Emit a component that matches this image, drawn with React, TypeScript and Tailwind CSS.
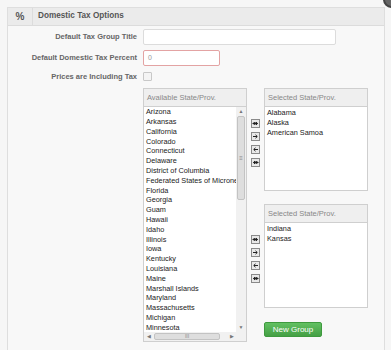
import React from "react";

const available = [
  "Arizona",
  "Arkansas",
  "California",
  "Colorado",
  "Connecticut",
  "Delaware",
  "District of Columbia",
  "Federated States of Micronesia",
  "Florida",
  "Georgia",
  "Guam",
  "Hawaii",
  "Idaho",
  "Illinois",
  "Iowa",
  "Kentucky",
  "Louisiana",
  "Maine",
  "Marshall Islands",
  "Maryland",
  "Massachusetts",
  "Michigan",
  "Minnesota",
];

const MoveIcon = ({ kind }: { kind: "allRight" | "right" | "left" | "allLeft" }) => (
  <svg width="9" height="9" viewBox="0 0 9 9" className="block">
    <rect x="0.5" y="0.5" width="8" height="8" fill="#e9e9e9" stroke="#8a8a8a" />
    {kind === "right" && (
      <path d="M2 4.5h4M4.5 2.8l1.8 1.7-1.8 1.7" stroke="#222" strokeWidth="1" fill="none" />
    )}
    {kind === "left" && (
      <path d="M7 4.5H3M4.5 2.8L2.7 4.5l1.8 1.7" stroke="#222" strokeWidth="1" fill="none" />
    )}
    {kind === "allRight" && (
      <>
        <circle cx="3.6" cy="4.5" r="1.4" fill="#333" />
        <path d="M1.5 4.5h5M5 3l1.6 1.5L5 6" stroke="#222" strokeWidth="1" fill="none" />
      </>
    )}
    {kind === "allLeft" && (
      <>
        <circle cx="5.4" cy="4.5" r="1.4" fill="#333" />
        <path d="M7.5 4.5h-5M4 3L2.4 4.5 4 6" stroke="#222" strokeWidth="1" fill="none" />
      </>
    )}
  </svg>
);

const MoveButtons = () => (
  <div className="flex w-[17px] flex-col items-center gap-[4px] pt-[31px]">
    <MoveIcon kind="allRight" />
    <MoveIcon kind="right" />
    <MoveIcon kind="left" />
    <MoveIcon kind="allLeft" />
  </div>
);

const ListHeader = ({ title }: { title: string }) => (
  <div className="flex h-[18px] items-center border-b border-[#cfcfcf] bg-[#efefef] pl-[3px] text-[7.5px] text-[#888]">
    {title}
  </div>
);

const SelectedBox = ({ items, height }: { items: string[]; height: string }) => (
  <div className={`flex w-[104px] flex-col border border-[#cfcfcf] bg-white ${height}`}>
    <ListHeader title="Selected State/Prov." />
    <ul className="pl-[2px] pt-[1px] text-[7.3px] leading-[9.9px] text-[#222]">
      {items.map((s) => (
        <li key={s}>{s}</li>
      ))}
    </ul>
  </div>
);

export default function App() {
  return (
    <div
      className="relative h-[350px] w-[391px] overflow-hidden bg-[#f6f6f6] pl-[7px] pr-[6px] pt-[7px]"
      style={{ fontFamily: '"Liberation Sans", Arial, sans-serif' }}
    >
      <div className="h-[400px] border border-[#dedede] bg-[#f8f8f8]">
        {/* header */}
        <div className="flex h-[18px] items-stretch border-b border-[#dcdcdc] bg-[#ebebeb] text-[#555]">
          <div className="flex w-[25px] items-center justify-center border-r border-[#dcdcdc] text-[10px] font-bold">
            %
          </div>
          <div className="flex items-center pl-[5px] text-[8.2px] font-bold">Domestic Tax Options</div>
        </div>

        {/* form rows */}
        <div className="flex flex-col pt-[3px] text-[7.5px] font-bold text-[#666]">
          <div className="flex items-center">
            <div className="w-[129px] text-right">Default Tax Group Title</div>
            <div className="ml-[6px] h-[16px] w-[193px] rounded-[2px] border border-[#dcdcdc] bg-white" />
          </div>
          <div className="mt-[5px] flex items-center">
            <div className="w-[129px] text-right">Default Domestic Tax Percent</div>
            <div className="ml-[6px] flex h-[16px] w-[77px] items-center rounded-[2px] border border-[#e3a3a3] bg-white pl-[4px] text-[7px] font-normal text-[#999]">
              0
            </div>
          </div>
          <div className="mt-[5px] flex items-center">
            <div className="w-[129px] text-right">Prices are Including Tax</div>
            <div className="ml-[6px] h-[9px] w-[9px] rounded-[1px] border border-[#c8c8c8] bg-[#f4f4f4]" />
          </div>
        </div>

        {/* state lists */}
        <div className="mt-[6px] flex pl-[135px]">
          <div className="flex h-[254px] w-[104px] flex-col border border-[#cfcfcf] bg-white">
            <ListHeader title="Available State/Prov." />
            <div className="flex min-h-0 flex-1">
              <ul className="min-w-0 flex-1 overflow-hidden whitespace-nowrap pl-[2px] text-[7.3px] leading-[9.8px] text-[#222]">
                {available.map((s) => (
                  <li key={s}>{s}</li>
                ))}
              </ul>
              {/* vertical scrollbar */}
              <div className="flex w-[10px] flex-col bg-[#f1f1f1]">
                <div className="flex h-[9px] items-center justify-center text-[5px] text-[#777]">▲</div>
                <div className="mx-[1px] flex h-[84px] items-center justify-center rounded-[2px] border border-[#c3c3c3] bg-[#dedede] text-[6px] leading-none text-[#888]">
                  ≡
                </div>
                <div className="flex-1" />
                <div className="flex h-[9px] items-center justify-center text-[5px] text-[#777]">▼</div>
              </div>
            </div>
            {/* horizontal scrollbar */}
            <div className="flex h-[9px] items-center bg-[#f1f1f1]">
              <div className="flex w-[10px] items-center justify-center text-[5px] text-[#777]">◀</div>
              <div className="flex h-[7px] w-[66px] items-center justify-center rounded-[2px] border border-[#c3c3c3] bg-[#dedede] text-[5px] leading-none text-[#888]">
                III
              </div>
              <div className="flex-1" />
              <div className="flex w-[9px] items-center justify-center text-[5px] text-[#777]">▶</div>
              <div className="w-[10px]" />
            </div>
          </div>

          <div className="flex flex-col">
            <div className="flex">
              <MoveButtons />
              <SelectedBox items={["Alabama", "Alaska", "American Samoa"]} height="h-[103px]" />
            </div>
            <div className="mt-[13px] flex">
              <MoveButtons />
              <SelectedBox items={["Indiana", "Kansas"]} height="h-[104px]" />
            </div>
            <div className="ml-[17px] mt-[14px]">
              <button className="flex h-[15px] w-[58px] items-center justify-center rounded-[2px] border border-[#3e9a3e] bg-gradient-to-b from-[#62c062] to-[#45a045] text-[8px] text-white">
                New Group
              </button>
            </div>
          </div>
        </div>
      </div>

      {/* dialog close button peeking in corner */}
      <div className="absolute right-[-9px] top-[-9px] h-[17px] w-[17px] rounded-full border-2 border-[#444] bg-[#666]" />
    </div>
  );
}
